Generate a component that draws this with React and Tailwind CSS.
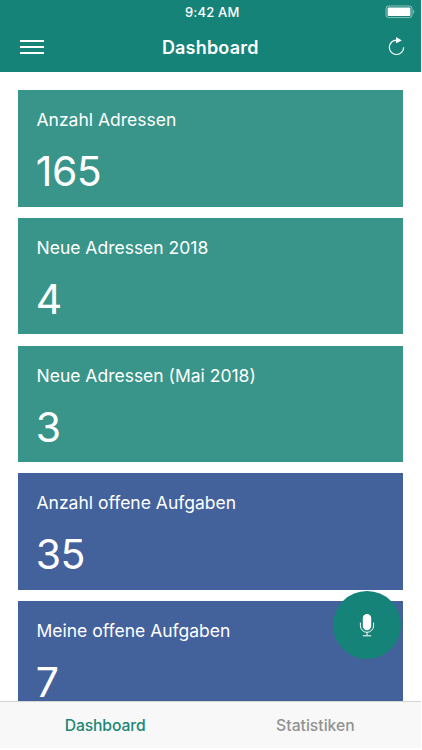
const cards = [
  { label: 'Anzahl Adressen', value: '165', color: 'bg-[#39958a]' },
  { label: 'Neue Adressen 2018', value: '4', color: 'bg-[#39958a]' },
  { label: 'Neue Adressen (Mai 2018)', value: '3', color: 'bg-[#39958a]' },
  { label: 'Anzahl offene Aufgaben', value: '35', color: 'bg-[#43629b]' },
  { label: 'Meine offene Aufgaben', value: '7', color: 'bg-[#43629b]' },
];

function Battery() {
  return (
    <svg width="30" height="14" viewBox="0 0 30 14" fill="none">
      <rect x="1" y="1" width="26" height="11.6" rx="2.6" stroke="#fff" strokeOpacity=".5" />
      <rect x="2.6" y="2.6" width="22.8" height="8.4" rx="1" fill="#fff" />
      <path d="M28.3 4.8c1.3.7 1.3 3.3 0 4z" fill="#fff" fillOpacity=".6" />
    </svg>
  );
}

function Refresh() {
  return (
    <svg width="18" height="20" viewBox="0 0 18 20" fill="none">
      <path d="M9.5 3.1A7.2 7.2 0 1 0 16.7 10.3" stroke="#fff" strokeWidth="1.2" />
      <path d="M9 0v6.2l5.9-2.8z" fill="#fff" />
    </svg>
  );
}

function Microphone() {
  return (
    <svg width="16" height="24" viewBox="0 0 16 24" fill="none">
      <rect x="3.8" y="1" width="8.4" height="16.2" rx="4.2" fill="#fff" />
      <path d="M1.4 9.6v3.1a6.6 6.6 0 0 0 13.2 0V9.6M8 19.3v3.3M3.8 22.8h8.4" stroke="#fff" strokeWidth="1" />
    </svg>
  );
}

export default function App() {
  return (
    <div className="relative flex h-[750px] w-[422px] flex-col overflow-hidden bg-white pb-[2px] font-['Inter','Liberation_Sans',sans-serif]">
      <header className="h-[72px] w-[420.5px] shrink-0 bg-[#168378] text-white">
        <div className="grid h-6 grid-cols-[1fr_auto_1fr] items-center pl-[4px]">
          <span />
          <span className="text-[13px] leading-6 font-medium tracking-[0.2px]">9:42 AM</span>
          <span className="flex justify-end pr-[6px]"><Battery /></span>
        </div>
        <div className="grid h-[46px] grid-cols-[1fr_auto_1fr] items-center">
          <button className="ml-5 flex w-6 flex-col gap-1" aria-label="Menu">
            <span className="h-[2px] bg-white" />
            <span className="h-[2px] bg-white" />
            <span className="h-[2px] bg-white" />
          </button>
          <h1 className="pt-px text-[18px] leading-6 font-semibold tracking-[0.2px]">Dashboard</h1>
          <button className="mr-[15.5px] flex justify-end pb-px" aria-label="Refresh"><Refresh /></button>
        </div>
      </header>

      <main className="flex min-h-0 w-[421px] flex-1 flex-col gap-[11.3px] overflow-hidden px-[18px] pt-[18px]">
        {cards.map((card) => (
          <section key={card.label} className={`h-[116.5px] shrink-0 px-[18.5px] pt-[18px] text-white ${card.color}`}>
            <h2 className="text-[17.5px] leading-6 font-normal">{card.label}</h2>
            <p className="-ml-[0.7px] mt-[14px] text-[41px] leading-[50px] font-normal tracking-[-0.6px]">{card.value}</p>
          </section>
        ))}
      </main>

      <nav className="grid h-[47px] w-[420.5px] shrink-0 grid-cols-2 border-t border-[#d4d4d5] bg-[#f8f8f8] text-center text-[15.7px] leading-[47px] font-medium">
        <span className="tracking-[-0.1px] text-[#208675]">Dashboard</span>
        <span className="text-[#929292]">Statistiken</span>
      </nav>

      <button className="absolute top-[591.3px] left-[333.3px] flex size-[67.4px] items-center justify-center rounded-full bg-[#168378]" aria-label="Voice input">
        <Microphone />
      </button>
    </div>
  );
}
